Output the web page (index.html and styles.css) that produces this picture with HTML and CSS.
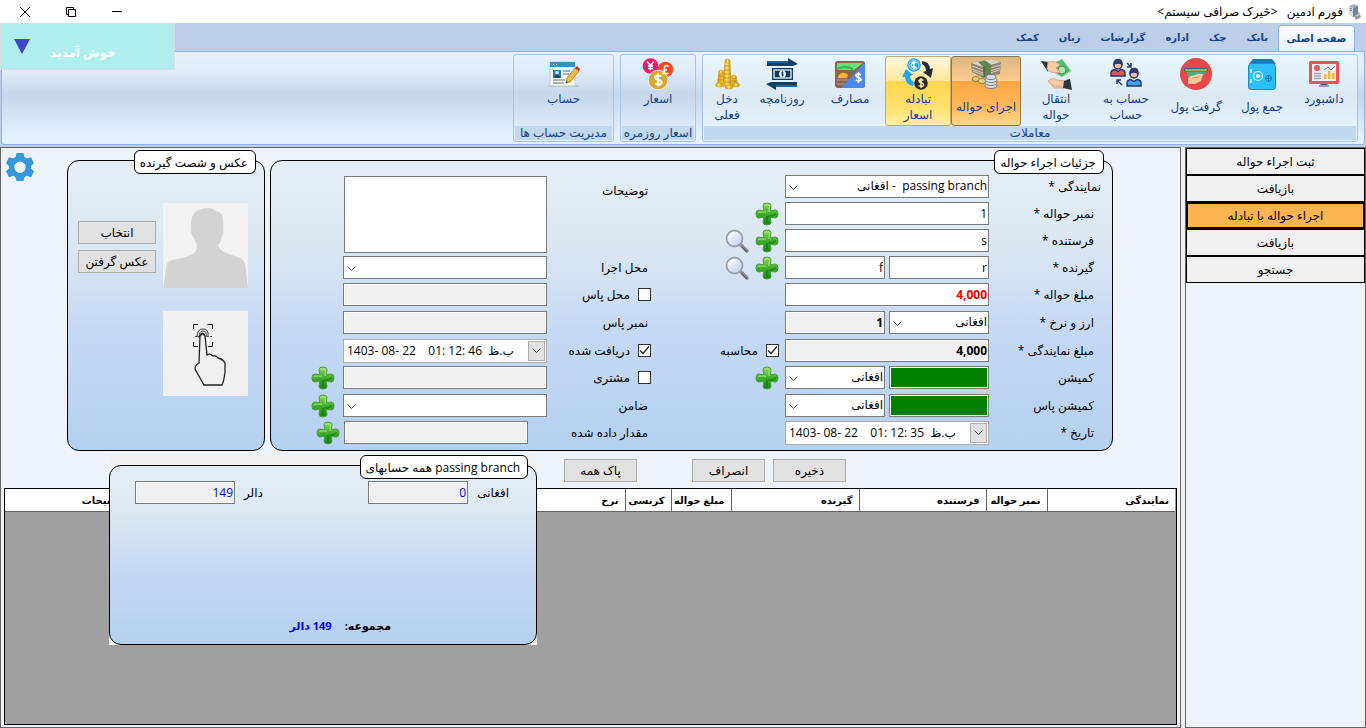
FILE: index.html
```html
<!DOCTYPE html>
<html lang="fa" dir="rtl">
<head>
<meta charset="utf-8">
<title>فورم ادمین</title>
<link rel="stylesheet" href="styles.css">
</head>
<body>
<svg class="sprite" aria-hidden="true">
  <defs>
    <linearGradient id="green" x1="0" y1="0" x2="0" y2="1"><stop offset="0" stop-color="#8fdc58"/><stop offset=".5" stop-color="#3fae2a"/><stop offset="1" stop-color="#17850f"/></linearGradient>
    <linearGradient id="lens" x1="0" y1="0" x2="1" y2="1"><stop offset="0" stop-color="#fff"/><stop offset="1" stop-color="#b9cdf5"/></linearGradient>
    <linearGradient id="gold" x1="0" y1="0" x2="1" y2="0"><stop offset="0" stop-color="#d99b12"/><stop offset=".5" stop-color="#ffe26a"/><stop offset="1" stop-color="#c88a0a"/></linearGradient>
  </defs>
  <symbol id="plus" viewBox="0 0 24 24">
    <path d="M8 3.500Q8 1 12 1t4 2.500L15.300 8.700 20.500 8Q23 8 23 12t-2.500 4L15.300 15.300 16 20.500Q16 23 12 23t-4-2.500L8.700 15.300 3.500 16Q1 16 1 12t2.500-4L8.700 8.700z" fill="url(#green)" stroke="#4f9c48" stroke-width="1"/>
    <path d="M9.500 3.500q2.500-1.500 5 0L14 10M3 10.500q5-.8 8 0" fill="none" stroke="#c4f09a" stroke-width="1.500" opacity=".5"/>
    <path d="M13.500 14q4 .8 7.500-2.500M12 14v7" fill="none" stroke="#0b6d08" stroke-width="2" opacity=".5"/>
  </symbol>
  <symbol id="search" viewBox="0 0 24 24">
    <path d="M15 15l7 7" stroke="#8a8f96" stroke-width="3.600" stroke-linecap="round"/>
    <path d="M17 18l4.500 4.500" stroke="#5f646b" stroke-width="1.500" stroke-linecap="round"/>
    <circle cx="9.500" cy="9.500" r="8" fill="url(#lens)" stroke="#9a9fae" stroke-width="1.800"/>
    <path d="M4.500 9q.5-4 4.500-5" fill="none" stroke="#fff" stroke-width="2"/>
  </symbol>
</svg>

<div class="window">
  <header class="titlebar">
    <svg class="app-icon" viewBox="0 0 16 16" aria-hidden="true"><path d="M3 2l5-2 4 2v9l-5 2-4-3z" fill="#9fb0bd"/><path d="M3 2l4 2v9l-4-3z" fill="#d5dee5"/><path d="M7 4l5-2v9l-5 2z" fill="#6f8493"/><path d="M4 4l2 1M4 6l2 1" stroke="#567" stroke-width="1"/><path d="M8 11l5-3 2 5-5 3z" fill="#8d9aa3"/><path d="M10 12l4-2" stroke="#d7e0e6"/></svg>
    <h1 class="app-title">فورم ادمین &nbsp; &lt;څیرک صرافی سیستم&gt;</h1>
    <button class="win-btn" aria-label="Minimize"><svg viewBox="0 0 12 12"><path d="M1 5.500h10"/></svg></button>
    <button class="win-btn" aria-label="Restore"><svg viewBox="0 0 12 12"><path d="M3.500 3.500h7v7h-7zM3.500 8.500h-2v-7h7v2"/></svg></button>
    <button class="win-btn" aria-label="Close"><svg viewBox="0 0 12 12"><path d="M1 1l10 10M11 1L1 11"/></svg></button>
  </header>

  <div class="ribbon">
    <nav class="tabs">
      <button class="tab tab-active">صفحه اصلی</button>
      <button class="tab">بانک</button>
      <button class="tab">چک</button>
      <button class="tab">اداره</button>
      <button class="tab">گزارشات</button>
      <button class="tab">زبان</button>
      <button class="tab">کمک</button>
    </nav>
    <div class="ribbon-body">
      <section class="group group-main">
        <div class="group-items">
          <button class="tool w62">
            <svg viewBox="0 0 32 32"><path d="M13 24h6l1 5h-8z" fill="#455a6b"/><path d="M11 27h10v2H11z" fill="#90a4b0"/><rect x="1" y="3" width="30" height="23" rx="1.500" fill="#f2515a"/><rect x="4" y="6" width="24" height="17" fill="#f1eef0"/><circle cx="9" cy="10" r="3" fill="#f2515a"/><path d="M9 10V7a3 3 0 0 1 3 3z" fill="#4bb36b"/><path d="M6 15.500h7M6 18h7M6 20.500h7" stroke="#9aa5ad" stroke-width="1.300"/><path d="M16 21v-5h2.500v5zM20 21v-8h2.500v8zM24 21v-6h2.500v6z" fill="#f5b83d"/><path d="M16 12l4-3 3 3 4-4" fill="none" stroke="#4c7fc0"/></svg>
            <span class="tool-label">داشبورد</span></button>
          <button class="tool w62">
            <svg viewBox="0 0 32 32"><path d="M7 1h19l4 5H3z" fill="#1479b8"/><rect x="2.500" y="5.500" width="27" height="26" rx="3" fill="#2cc0fb" stroke="#1689cc"/><path d="M5 11v4M5 21v4" stroke="#e8faff" stroke-width="1.500"/><circle cx="12" cy="18" r="4.500" fill="none" stroke="#e8faff" stroke-width="1.200"/><circle cx="12" cy="18" r="2" fill="#e8faff"/><circle cx="22.500" cy="20.500" r="3" fill="none" stroke="#157bb5"/><path d="M22.500 17v7M19 20.500h7" stroke="#157bb5"/></svg>
            <span class="tool-label mid">جمع پول</span></button>
          <button class="tool w70">
            <svg viewBox="0 0 32 32"><circle cx="16" cy="16" r="16" fill="#e9474b"/><path d="M6 13h20l-4 7H9z" fill="#49ad8b"/><rect x="4" y="10" width="24" height="3.500" rx="1.500" fill="#2a6d70"/><path d="M5 12h22" stroke="#f4d95c" stroke-width="1.200"/><path d="M8 20l3-2 7-2h5l-2 7-6 3H8z" fill="#fbc895"/><path d="M12 20l7-1" stroke="#d89a66"/></svg>
            <span class="tool-label mid">گرفت پول</span></button>
          <button class="tool w70">
            <svg viewBox="0 0 32 32"><g stroke="#26346b" stroke-width="1.400"><circle cx="8" cy="7" r="4" fill="#f6bc93"/><path d="M4 6q0-4.500 4-4.500T12 6q-4-2-8 0z" fill="#334580"/><path d="M1 18v-3q0-3 4-3.500l3 2 3-2q4 .5 4 3.500v3z" fill="#e8525a"/><circle cx="24" cy="16" r="4" fill="#f6bc93"/><path d="M20 15q0-4.500 4-4.500t4 4.500q-4-2-8 0z" fill="#334580"/><path d="M17 28v-3q0-3 4-3.500l3 2 3-2q4 .5 4 3.500v3z" fill="#3fa4e5"/><path d="M17 5l4 4m0-4v4h-4M12 27l-5-5m0 4v-4h4" fill="none"/></g></svg>
            <span class="tool-label">حساب&nbsp;به حساب</span></button>
          <button class="tool w70">
            <svg viewBox="0 0 32 32"><path d="M16 4l6-3 9 12-9 6-7-4z" fill="#4fbb68" stroke="#a7e2ae"/><circle cx="22" cy="12" r="4" fill="#a9e6b1" stroke="#2d9750"/><path d="M1 3l8 1-1 10z" fill="#2c3740"/><path d="M8 4q8-2 12 3l-4 3 4 3-2 2-8-1-3-3z" fill="#fbc9a0" stroke="#d79a72" stroke-width=".8"/><path d="M8 23q5-4 9-1l8 1 3-2-4 9H14z" fill="#fbc9a0" stroke="#d79a72" stroke-width=".8"/><path d="M24 23l6-2 2 11-9-2z" fill="#2c3740"/><path d="M9 24l5 4 9 1" fill="none" stroke="#e6ad85"/></svg>
            <span class="tool-label">انتقال حواله</span></button>
          <button class="tool w70 tool-checked">
            <svg viewBox="0 0 32 32"><path d="M1 5l20-4 10 3-1 12-17 4-11-6z" fill="#8f8473"/><path d="M1 5l20-4 10 3-18 5z" fill="#d9d5c2"/><path d="M2 8l11 4 18-5M2 11l11 4 17-5M3 13l10 4 17-5" fill="none" stroke="#d6d0bb"/><path d="M8 4l7-1.500 6 4V18l-7 1.500-1-11z" fill="#63834e"/><path d="M14 8v11" stroke="#40602f"/><ellipse cx="6" cy="21" rx="4" ry="2.500" fill="#dfc877" stroke="#98782e"/><ellipse cx="12" cy="23" rx="4" ry="2.500" fill="#e8d68e" stroke="#98782e"/><g fill="#d9dde1" stroke="#767e86"><ellipse cx="21" cy="28" rx="6" ry="2.500"/><ellipse cx="21" cy="25" rx="6" ry="2.500"/><ellipse cx="21" cy="22" rx="6" ry="2.500"/><ellipse cx="21" cy="19" rx="5" ry="2.500"/></g></svg>
            <span class="tool-label mid">اجرای حواله</span></button>
          <button class="tool w66 tool-hot">
            <svg viewBox="0 0 32 32"><circle cx="12" cy="7" r="6.800" fill="#20a5ee"/><circle cx="12" cy="7" r="5" fill="none" stroke="#bfe8ff" stroke-width=".8"/><path d="M14.500 5q-2.500-2-4.500 0-1.500 2 0 4 2 2 4.500 0M12 2.500v9" fill="none" stroke="#fff" stroke-width="1.500"/><circle cx="19" cy="25" r="6.800" fill="#272d33"/><path d="M21.500 22.500q-2.500-1.800-4.500 0 0 2 2.500 2.500t2 2.500q-2 2-5 0M19 20v10" fill="none" stroke="#ffe78c" stroke-width="1.500"/><path d="M20 3q8 1 8 8l3-1-2 10-8-6 3-1q0-5-4-7z" fill="#272d33"/><path d="M11 28q-7-1-8-9H0l4-8 7 6-3 1q0 4 4 6z" fill="#20a5ee"/></svg>
            <span class="tool-label">تبادله اسعار</span></button>
          <button class="tool w70">
            <svg viewBox="0 0 32 32"><rect x="1" y="3" width="30" height="27" rx="3" fill="#8a6450"/><path d="M3 5h26l-9 7H3z" fill="#6be077"/><path d="M3 11q7-4 16 0" fill="none" stroke="#37b556" stroke-width="2"/><path d="M4 18q5-6 10-1l-1 3H4z" fill="#ffb22e"/><path d="M3 22h13M3 26h8" stroke="#b08b71" stroke-width="1.500"/><path d="M31 4v23q0 3-3 3H7z" fill="#4d86ef"/><path d="M27 17q-3-2-5 0 0 2 2.500 2.500T27 22q-2 2-5 0M24.500 14v11" fill="none" stroke="#fff" stroke-width="1.600"/></svg>
            <span class="tool-label">مصارف</span></button>
          <button class="tool w66">
            <svg viewBox="0 0 32 32"><path d="M1 3h21V0l10 6-5 2H1zM31 29H10v3L0 26l5-2h26z" fill="#123f66"/><path d="M1 3h21v2H1zM31 29H10v-2h21z" fill="#1e6496"/><rect x="6" y="10" width="21" height="12" fill="#103a5d"/><rect x="8" y="12" width="17" height="8" fill="none" stroke="#e6f4ff" stroke-width="1.300"/><circle cx="16.500" cy="16" r="3.500" fill="#e6f4ff"/><path d="M16.500 13.500v5M15 15h2.500M15.500 17h2.500" stroke="#103a5d"/></svg>
            <span class="tool-label">روزنامچه</span></button>
          <button class="tool w44">
            <svg viewBox="0 0 32 32"><g fill="url(#gold)" stroke="#c9940f" stroke-width=".6"><path d="M14 3h5l1 25h-8z"/><path d="M8 14h4l1 14H6zM21 19h4l2 9h-7z"/><ellipse cx="16.500" cy="3" rx="2.500" ry="2"/><ellipse cx="10" cy="14" rx="2.500" ry="1.800"/><ellipse cx="23" cy="19" rx="2.500" ry="1.800"/><ellipse cx="8" cy="27" rx="3.500" ry="2"/><ellipse cx="25" cy="27" rx="3.500" ry="2"/><ellipse cx="18" cy="29" rx="4" ry="2"/></g><path d="M13 8h6M13 12h6M12 16h8M12 20h8M12 24h8M7 18h6M7 22h6M21 23h4" stroke="#b98208" stroke-width=".7"/></svg>
            <span class="tool-label">دخل فعلی</span></button>
        </div>
        <h2 class="group-title">معاملات</h2>
      </section>
      <section class="group">
        <div class="group-items">
          <button class="tool w70">
            <svg viewBox="0 0 32 32"><circle cx="8.500" cy="8" r="7.800" fill="#f5146c"/><circle cx="23.500" cy="11.500" r="7.800" fill="#fa4b1b"/><circle cx="16" cy="22" r="9.800" fill="#dca526" stroke="#e7effa"/><path d="M5 3.500l3.500 4L12 3.500M8.500 7.500v5M6 8h5M6 10.500h5M26.500 8.500q-3-2-4 .5v5l-1.500 1.500h5.500M21 12h4" fill="none" stroke="#fff" stroke-width="1.500"/><path d="M19.500 18.500q-3.500-2-6.500 0 0 3 3.500 3.500t3 3.500q-3 2.500-6.500 0M16 15.500v13" fill="none" stroke="#fff" stroke-width="2"/></svg>
            <span class="tool-label">اسعار</span></button>
        </div>
        <h2 class="group-title">اسعار روزمره</h2>
      </section>
      <section class="group">
        <div class="group-items">
          <button class="tool w95">
            <svg viewBox="0 0 32 32"><path d="M0 29h32l-2-2H2z" fill="#bcc2c8"/><rect x="2" y="4" width="25" height="24" rx="1" fill="#f6f6f3" stroke="#c3c9cd"/><path d="M2 4h25v5H2z" fill="#3594bf"/><path d="M5 6.500h1M8 6.500h1" stroke="#fff"/><rect x="5" y="12" width="8" height="8" fill="#2f7fae"/><circle cx="9" cy="14.500" r="1.700" fill="#cfe8f4"/><path d="M6 20q0-3 3-3t3 3z" fill="#174866"/><path d="M15 13h7M15 16h6M5 22h12M5 25h11" stroke="#5f6f7a" stroke-width="1.200"/><path d="M27 10l4 3-9 11-4 1 1-5z" fill="#f5b942" stroke="#a66b17" stroke-width=".7"/><path d="M27 10l2-2 3 3-1 2z" fill="#c02a2e"/><path d="M18 25l.5-2 1.500 1.300z" fill="#222"/></svg>
            <span class="tool-label">حساب</span></button>
        </div>
        <h2 class="group-title">مدیریت حساب ها</h2>
      </section>
    </div>
    <div class="welcome"><span class="welcome-text">خوش آمدید</span><span class="welcome-arrow"></span></div>
  </div>

  <div class="workspace">
    <nav class="side">
      <button class="side-item">ثبت اجراء حواله</button>
      <button class="side-item">بازیافت</button>
      <button class="side-item side-active">اجراء حواله با تبادله</button>
      <button class="side-item">بازیافت</button>
      <button class="side-item">جستجو</button>
    </nav>

    <main class="main">
      <div class="panels">
        <section class="panel details">
          <h2 class="panel-title">جزئیات اجراء حواله</h2>
          <form class="form">
            <label class="c1 r1 wide-label" for="agency">نمایندگی *</label>
            <select class="c2 r1 field" id="agency"><option>passing branch&nbsp; - افغانی</option></select>

            <label class="c1 r2" for="number">نمبر حواله *</label>
            <input class="c2 r2 field" id="number" value="1">
            <span class="c3 r2 tools"><button type="button" class="icon-btn" aria-label="+"><svg><use href="#plus"/></svg></button></span>

            <label class="c1 r3" for="sender">فرستنده *</label>
            <input class="c2 r3 field" id="sender" value="s">
            <span class="c3 r3 tools"><button type="button" class="icon-btn" aria-label="+"><svg><use href="#plus"/></svg></button><button type="button" class="icon-btn" aria-label="جستجو"><svg><use href="#search"/></svg></button></span>

            <label class="c1 r4" for="receiver">گیرنده *</label>
            <span class="c2 r4 pair"><input class="field" id="receiver" value="r"><input class="field" aria-label="گیرنده" value="f"></span>
            <span class="c3 r4 tools"><button type="button" class="icon-btn" aria-label="+"><svg><use href="#plus"/></svg></button><button type="button" class="icon-btn" aria-label="جستجو"><svg><use href="#search"/></svg></button></span>

            <label class="c1 r5" for="amount">مبلغ حواله *</label>
            <input class="c2 r5 field strong red" id="amount" value="4,000">

            <label class="c1 r6" for="currency">ارز و نرخ *</label>
            <span class="c2 r6 pair"><select class="field" id="currency"><option>افغانی</option></select><input class="field strong" aria-label="نرخ" value="1" readonly></span>

            <label class="c1 r7" for="agency-amount">مبلغ نمایندگی *</label>
            <input class="c2 r7 field strong" id="agency-amount" value="4,000" readonly>
            <label class="c3 r7 check"><input type="checkbox" checked>محاسبه</label>

            <label class="c1 r8" for="fee">کمیشن</label>
            <span class="c2 r8 pair"><input class="field green" id="fee"><select class="field" aria-label="کمیشن"><option>افغانی</option></select></span>
            <span class="c3 r8 tools"><button type="button" class="icon-btn" aria-label="+"><svg><use href="#plus"/></svg></button></span>

            <label class="c1 r9" for="pass-fee">کمیشن پاس</label>
            <span class="c2 r9 pair"><input class="field green" id="pass-fee"><select class="field" aria-label="کمیشن پاس"><option>افغانی</option></select></span>

            <label class="c1 r10" for="date">تاریخ *</label>
            <span class="c2 r10 date"><button type="button" class="date-btn" aria-label="تاریخ"></button><input id="date" dir="ltr" value="1403- 08- 22    01: 12: 35  ب.ظ"></span>

            <label class="c5 r1 top-label" for="notes">توضیحات</label>
            <textarea class="c6 r1 notes" id="notes"></textarea>

            <label class="c5 r4" for="place">محل اجرا</label>
            <select class="c6 r4 field" id="place"><option></option></select>

            <label class="c5 r5 check"><input type="checkbox">محل پاس</label>
            <input class="c6 r5 field" aria-label="محل پاس" readonly>

            <label class="c5 r6" for="pass-number">نمبر پاس</label>
            <input class="c6 r6 field" id="pass-number" readonly>

            <label class="c5 r7 check"><input type="checkbox" checked>دریافت شده</label>
            <span class="c6 r7 date"><button type="button" class="date-btn" aria-label="دریافت شده"></button><input aria-label="دریافت شده" dir="ltr" value="1403- 08- 22    01: 12: 46  ب.ظ"></span>

            <label class="c5 r8 check"><input type="checkbox">مشتری</label>
            <input class="c6 r8 field" aria-label="مشتری" readonly>
            <span class="c7 r8 tools"><button type="button" class="icon-btn" aria-label="+"><svg><use href="#plus"/></svg></button></span>

            <label class="c5 r9" for="guarantor">ضامن</label>
            <select class="c6 r9 field" id="guarantor"><option></option></select>
            <span class="c7 r9 tools"><button type="button" class="icon-btn" aria-label="+"><svg><use href="#plus"/></svg></button></span>

            <label class="c5 r10" for="given">مقدار داده شده</label>
            <span class="c67 r10 given"><input class="field" id="given" readonly><button type="button" class="icon-btn" aria-label="+"><svg><use href="#plus"/></svg></button></span>
          </form>
        </section>

        <section class="panel photos">
          <h2 class="panel-title">عکس و شصت گیرنده</h2>
          <div class="photo-row">
            <div class="pictures">
              <svg class="picture" viewBox="0 0 85 85"><rect width="85" height="85" fill="#f2f2f2"/><path d="M0 85L4 61q1-3 5-4l14-3q9-3 11-8 0-6-3-11-4-4-3-14 0-15 16-16 6 0 9 3 7 1 7 10 1 14-1 15-1 6-4 9 1 6 11 9l11 4q4 2 5 6l3 24z" fill="#d3d3d3"/></svg>
              <svg class="picture" viewBox="0 0 85 85" fill="none" stroke="#222"><rect width="85" height="85" fill="#f0f0f0" stroke="none"/><path d="M30.500 18v-4.500H35M44.500 13.500h5V18M49.500 31v4.500H45M35 35.500h-4.500V31" /><path d="M32 25.500h17" stroke-width=".8" stroke-dasharray="2 1"/><path d="M34 26q0-8 6-8t5 7M36 27q0-7 4-7t3 6M37.500 24q0-2 2-2t2 2" stroke-width=".9"/><path d="M36 52l1-27q2.500-4 5 0l2 19q3-2 6 1 3-1 5 2 5 1 7 5v9q-1 9-3 13H41L32 58q0-4 4-6z" fill="#f0f0f0" stroke-width="1.300"/></svg>
            </div>
            <div class="photo-actions">
              <button class="btn">انتخاب</button>
              <button class="btn">عکس گرفتن</button>
            </div>
          </div>
        </section>

        <div class="gear-cell">
          <button class="gear" aria-label="Settings"><svg viewBox="0 0 28 28"><path fill="#3498db" fill-rule="evenodd" d="M10.500 0h7l1 4.200 2.400 1.400 4.100-1.400 3 6-3 2.800v2.600l3 2.600-3 6-4.200-1.400-2.300 1.400-1 3.800h-7l-1-3.800-2.300-1.400L3 24.200l-3-6 3-2.600V13L0 10.200l3-6 4.100 1.400 2.400-1.400zM14 8.500a5.700 5.700 0 1 0 0 11.400 5.700 5.700 0 0 0 0-11.400z"/></svg></button>
        </div>
      </div>

      <div class="actions">
        <button class="btn">ذخیره</button>
        <button class="btn">انصراف</button>
        <button class="btn btn-clear">پاک همه</button>
      </div>

      <div class="grid-box">
        <table class="grid">
          <colgroup><col class="k128"><col class="k61"><col class="k127"><col class="k128"><col class="k60"><col class="k46"><col><col class="k128"></colgroup>
          <thead><tr><th>نمایندگی</th><th>نمبر حواله</th><th>فرستنده</th><th>گیرنده</th><th>مبلغ حواله</th><th>کرنسی</th><th>نرخ</th><th>توضیحات</th></tr></thead>
        </table>
      </div>

      <aside class="popup">
        <section class="panel accounts">
          <h2 class="panel-title">passing branch همه حسابهای</h2>
          <div class="balances">
            <div class="balance"><label for="afn">افغانی</label><input class="field blue" id="afn" value="0" readonly></div>
            <div class="balance"><label for="usd">دالر</label><input class="field blue" id="usd" value="149" readonly></div>
          </div>
          <p class="total"><span>مجموعه:</span><span class="total-value">149 دالر</span></p>
        </section>
      </aside>
    </main>
  </div>
</div>
</body>
</html>
```
FILE: styles.css
```css
* { box-sizing: border-box; }
body {
  margin: 0;
  background: #bdcfe8;
  color: #000;
  font: 12px/16px "Open Sans", "DejaVu Sans", sans-serif;
}
button, input, select, textarea { font: inherit; color: inherit; margin: 0; }
button { padding: 0; border: 0; background: none; }
h1, h2, p { margin: 0; font-size: 12px; font-weight: 400; }
.sprite { position: absolute; width: 0; height: 0; }
.window { display: flex; flex-direction: column; min-height: 100vh; }

/* Title bar */
.titlebar { display: flex; align-items: center; height: 23px; padding-right: 4px; background: #fff; }
.app-icon { width: 16px; height: 16px; }
.app-title { flex: 1; padding-right: 3px; white-space: nowrap; }
.win-btn { display: flex; justify-content: center; align-items: center; width: 46px; height: 20px; }
.win-btn:last-child { margin-left: 2px; }
.win-btn svg { width: 12px; height: 12px; fill: none; stroke: #000; }

/* Ribbon */
.ribbon { position: relative; padding: 2px 1px 2px; color: #15428b; }
.tabs { display: flex; align-items: flex-end; height: 26px; padding-right: 10px; }
.tab { height: 26px; padding: 0 10px 2px; font-weight: 700; font-size: 10px; white-space: nowrap; }
.tab-active {
  width: 77px; padding: 0 0 2px; border: 1px solid #8db2e3; border-bottom: 0; border-radius: 4px 4px 0 0;
  background: linear-gradient(#fff, #e6f0fd);
}
.ribbon-body {
  display: flex; gap: 6px; padding: 2px 6px;
  border: 1px solid #8db2e3; border-radius: 3px;
  background: linear-gradient(#e7f1fe, #e2edfb 18%, #c7d8ec 45%, #c9daee 53%, #e1effe 88%, #e3f0fe);
}
.group { display: flex; flex-direction: column; padding: 1px; border: 1px solid #a9c3e3; border-radius: 3px; }
.group-main { background: linear-gradient(#e9f6fe, #dbe9f3 50%, #e6f8fe); }
.group-items { display: flex; flex: 1; padding: 0 1px; }
.group-title { height: 14px; line-height: 14px; background: #c2d8ef; text-align: center; white-space: nowrap; }
.tool { display: flex; flex-direction: column; align-items: center; height: 70px; padding-top: 1px; border: 1px solid transparent; border-radius: 3px; }
.tool svg { width: 32px; height: 32px; flex: none; }
.tool-label { width: min-content; padding-top: 1px; line-height: 16px; }
.tool-label.mid { padding-top: 9px; white-space: nowrap; }
.w44 { width: 44px; } .w62 { width: 62px; } .w66 { width: 66px; } .w70 { width: 70px; } .w95 { width: 95px; }
.tool-checked { border-color: #8e7651; background: linear-gradient(#dfb783, #fccb8e 35%, #fba643 36%, #ffb759 70%, #fdd58a); }
.tool-hot { border-color: #c8a864; background: linear-gradient(#fffbe0, #ffe79a 35%, #ffd650 36%, #ffe070 75%, #fff0a8); }
.welcome {
  position: absolute; top: 0; left: 0; display: flex; align-items: center; justify-content: flex-end; gap: 20px;
  width: 175px; height: 47px; padding-left: 13px;
  border: 1px solid #d5dede; background: #afeeee; color: #fff;
}
.welcome-text { padding-top: 12px; font-size: 12px; font-weight: 700; }
.welcome-arrow { width: 16px; border: 8px solid transparent; border-top: 15px solid #4046cc; border-bottom: 0; }

/* Workspace */
.workspace { display: flex; flex: 1; gap: 4px; background: #f0f0f0; }
.side { width: 181px; border: 1px solid #646464; background: #edf3f9; }
.side-item { display: block; width: 100%; height: 27px; border: 1px solid #000; background: #f0f0f0; box-shadow: 0 1px #000; }
.side-item:last-child { box-shadow: none; }
.side-active { border-width: 2px; background: #fab44f; }
.main {
  position: relative; display: flex; flex: 1; flex-direction: column;
  padding: 12px 3px 2px; border: 1px solid #646464; background: #edf3f9;
}
.panels { display: flex; gap: 5px; padding-right: 64px; }
.panel {
  position: relative; border: 1px solid #000; border-radius: 12px;
  background: linear-gradient(#e5edf4, #dce9f3 25%, #c4d8f3 62%, #b6d0f1);
}
.panel-title {
  position: absolute; top: -11px; right: 8px; height: 24px; padding: 4px 7px 0 5px;
  border: 1px solid #000; border-radius: 6px; background: #fff; white-space: nowrap;
}
.details { flex: 1; padding: 14px 9px 5px 36px; }
.form {
  display: grid;
  grid-template-columns: 114px 204px 64px 1fr 104px 204px 36px;
  grid-template-rows: repeat(4, 27px) 28px 28px 27px 28px 27px 24px;
  align-items: start;
}
.c1 { grid-column: 1; } .c2 { grid-column: 2; } .c3 { grid-column: 3; }
.c5 { grid-column: 5; } .c6 { grid-column: 6; } .c7 { grid-column: 7; } .c67 { grid-column: 6 / 8; }
.r1 { grid-row: 1; } .r2 { grid-row: 2; } .r3 { grid-row: 3; } .r4 { grid-row: 4; } .r5 { grid-row: 5; }
.r6 { grid-row: 6; } .r7 { grid-row: 7; } .r8 { grid-row: 8; } .r9 { grid-row: 9; } .r10 { grid-row: 10; }
.form label { padding-right: 9px; line-height: 23px; white-space: nowrap; }
.form .c5 { padding-right: 3px; }
.form .wide-label { padding-right: 2px; }
.form .top-label { padding-top: 4px; }
.field {
  width: 100%; min-width: 0; height: 23px; padding: 0 1px 1px;
  border: 1px solid #7a7a7a; border-radius: 0; outline: 0; background: #fff;
}
.field:read-only:not(select) { background: #f0f0f0; box-shadow: inset 0 0 0 1px #fff; }
select.field {
  appearance: none; padding: 0 1px 1px 18px;
  background: #fff url("data:image/svg+xml,%3Csvg xmlns='http://www.w3.org/2000/svg' width='9' height='6'%3E%3Cpath d='M.5 .5l4 4 4-4' fill='none' stroke='%23444'/%3E%3C/svg%3E") no-repeat 3px 9px;
}
.strong { font-weight: 700; }
.red { color: #f00; }
.blue { color: #00f; }
.field.green { background: #008000; box-shadow: inset 0 0 0 1px #fff; }
.pair { display: grid; grid-template-columns: 1fr 1fr; gap: 4px; }
.notes { grid-row: 1 / 4; width: 203px; height: 77px; margin-top: 1px; border: 1px solid #7a7a7a; background: #fff; resize: none; outline: 0; }
.date { display: flex; height: 24px; padding: 1px; border: 1px solid #adadad; background: #fff; }
.date input { flex: 1; min-width: 0; padding: 0 2px; border: 0; outline: 0; background: none; }
.date-btn {
  width: 17px; border: 1px solid #adadad;
  background: #e1e1e1 url("data:image/svg+xml,%3Csvg xmlns='http://www.w3.org/2000/svg' width='9' height='6'%3E%3Cpath d='M.5 .5l4 4 4-4' fill='none' stroke='%23444'/%3E%3C/svg%3E") no-repeat center;
}
.tools { display: flex; gap: 6px; padding-right: 6px; }
.c7.tools { padding-right: 8px; }
.icon-btn { width: 24px; height: 24px; flex: none; }
.icon-btn svg { display: block; width: 24px; height: 24px; }
.given { display: flex; justify-content: flex-end; gap: 4px; padding-left: 9px; }
.given .field { width: 184px; }
.form .check { display: flex; align-items: center; gap: 8px; height: 23px; padding: 0; }
.form .c3.check { padding-right: 6px; }
.check input {
  appearance: none; width: 13px; height: 13px; flex: none; border: 1px solid #333; background: #fff;
}
.check input:checked {
  background: #fff url("data:image/svg+xml,%3Csvg xmlns='http://www.w3.org/2000/svg' width='11' height='11'%3E%3Cpath d='M1 5.500l3 3 6-7' fill='none' stroke='%23222' stroke-width='1.200'/%3E%3C/svg%3E") no-repeat center;
}

.photos { width: 198px; padding: 42px 16px 54px 10px; }
.photo-row { display: flex; justify-content: space-between; }
.pictures { display: grid; gap: 23px; }
.picture { display: block; width: 85px; height: 85px; }
.photo-actions { display: flex; flex-direction: column; gap: 6px; width: 78px; padding-top: 18px; }
.btn { height: 23px; border: 1px solid #adadad; background: #e1e1e1; white-space: nowrap; }
.gear-cell { width: 58px; }
.gear { display: block; width: 28px; height: 28px; margin: -7px 28px 0 0; }
.gear svg { display: block; width: 28px; height: 28px; }

.actions { display: flex; gap: 8px; padding: 8px 331px 6px 0; }
.actions .btn { width: 73px; }
.actions .btn-clear { margin-right: 47px; }

.grid-box { flex: 1; padding-right: 1px; border: 1px solid #000; background: #a0a0a0; }
.grid { width: 100%; border-collapse: collapse; table-layout: fixed; background: #fff; }
.grid th {
  height: 22px; padding: 0 6px; border-bottom: 1px solid #646464; border-left: 1px solid #646464;
  font-size: 10px; font-weight: 700; text-align: right; white-space: nowrap;
}
.grid th:last-child { border-left: 0; }
.k128 { width: 128px; } .k127 { width: 127px; } .k61 { width: 61px; } .k60 { width: 60px; } .k46 { width: 46px; }

/* Accounts popup */
.popup { position: absolute; left: 108px; top: 307px; width: 428px; padding-top: 10px; background: #f0f0f0; }
.accounts { padding: 15px 27px 10px 25px; }
.balances { display: flex; justify-content: space-between; }
.balance { display: flex; align-items: center; gap: 9px; }
.balance .field { width: 100px; }
.total { display: flex; gap: 13px; padding: 114px 118px 0 0; font-size: 11px; font-weight: 700; }
.total-value { color: #00f; }
```
